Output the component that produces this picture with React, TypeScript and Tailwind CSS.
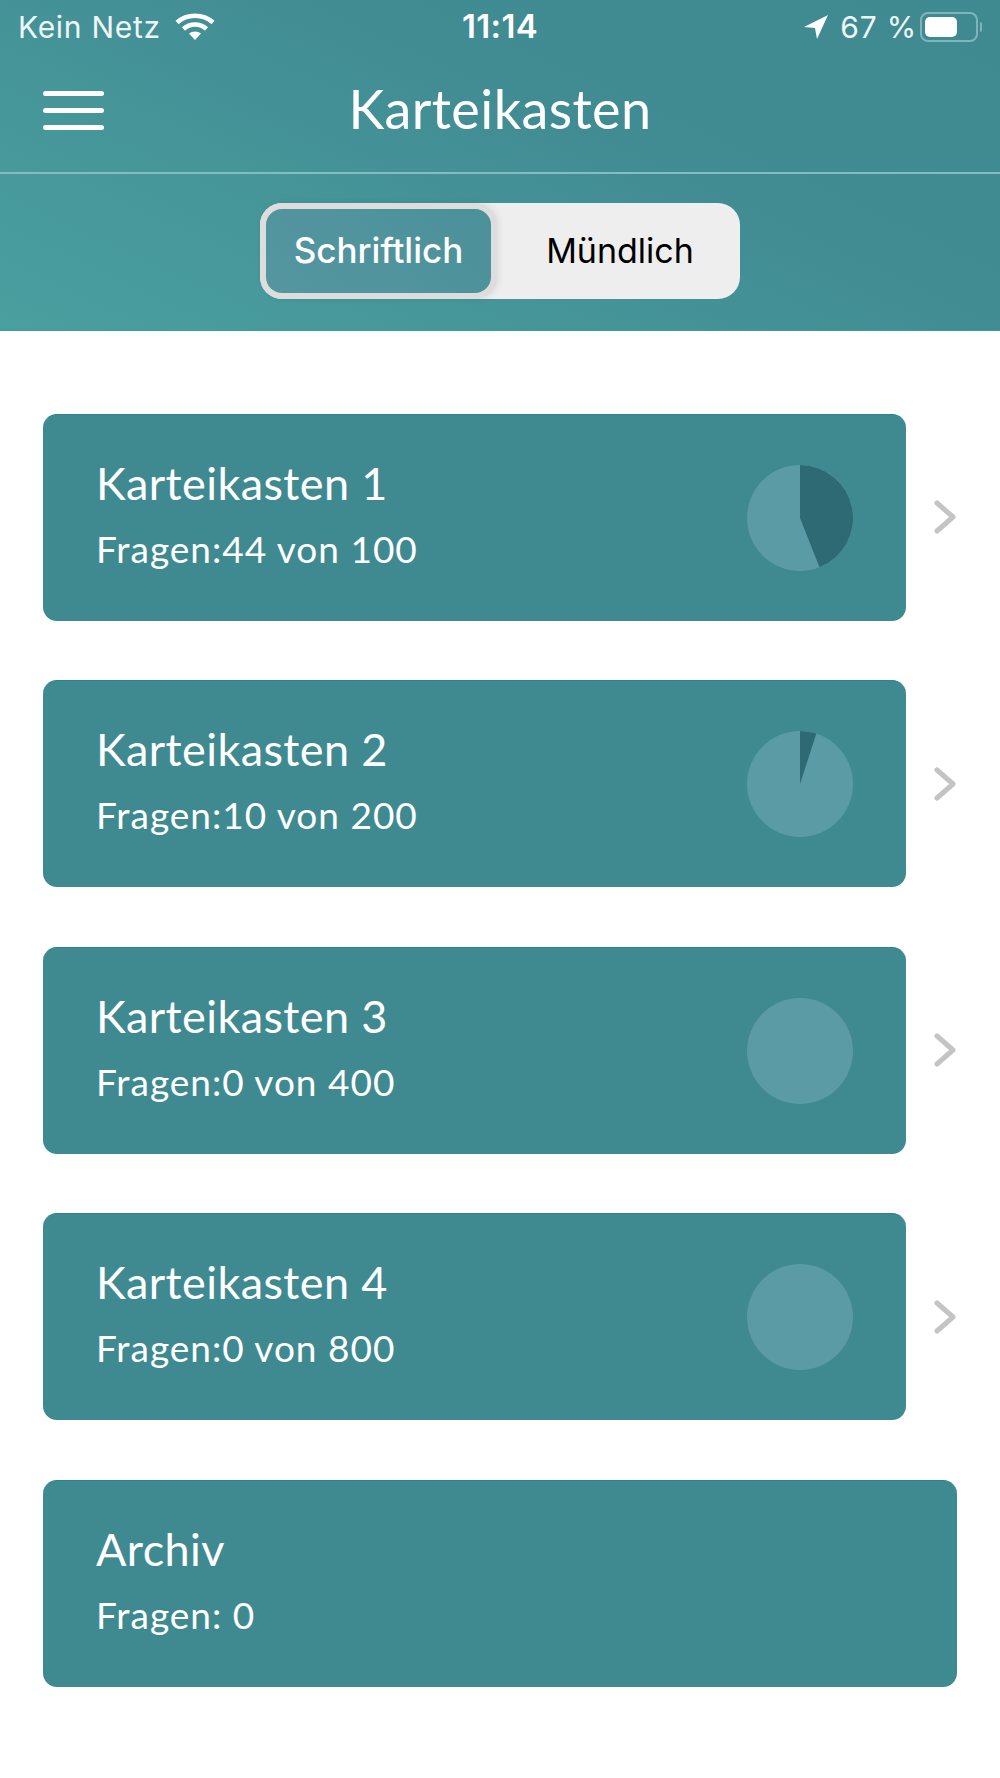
import React from "react";

const lato = "font-['Lato','Noto_Sans',sans-serif]";
const inter = "font-['Inter','Liberation_Sans',sans-serif]";

function Pie({ pct }: { pct: number }) {
  const a = (pct / 100) * 2 * Math.PI;
  const x = 53 + 53 * Math.sin(a);
  const y = 53 - 53 * Math.cos(a);
  return (
    <svg width="106" height="106" viewBox="0 0 106 106" className="shrink-0">
      <circle cx="53" cy="53" r="53" fill="#5a9ba6" />
      {pct > 0 && <path d={`M53 53 L53 0 A53 53 0 ${pct > 50 ? 1 : 0} 1 ${x} ${y} Z`} fill="#2e6a73" />}
    </svg>
  );
}

function Chevron() {
  return (
    <svg width="22" height="34" viewBox="0 0 22 34" className="shrink-0" fill="none">
      <path d="M3 3 L19 17 L3 31" stroke="#c4c4c4" strokeWidth="5" strokeLinecap="round" strokeLinejoin="round" />
    </svg>
  );
}

function CardText({ title, sub }: { title: string; sub: string }) {
  return (
    <div className={`${lato} text-white pb-[8px] -ml-[1px]`}>
      <div className="text-[45px] leading-[52px] tracking-[0.4px]">{title}</div>
      <div className="mt-[18px] text-[37px] leading-[44px] tracking-[1px]">{sub}</div>
    </div>
  );
}

const boxes = [
  { title: "Karteikasten 1", sub: "Fragen:44 von 100", pct: 44 },
  { title: "Karteikasten 2", sub: "Fragen:10 von 200", pct: 5 },
  { title: "Karteikasten 3", sub: "Fragen:0 von 400", pct: 0 },
  { title: "Karteikasten 4", sub: "Fragen:0 von 800", pct: 0 },
];

export default function App() {
  return (
    <div className="w-[1000px] h-[1778px] bg-white overflow-hidden">
      <header className="h-[331px] bg-[linear-gradient(25deg,#4a9f9f_0%,#46979a_28%,#418c93_60%,#3f8991_100%)] border-b border-[#3f9a9a] flex flex-col">
        <div className={`${inter} h-[54px] px-[18px] flex items-center justify-between text-white text-[30px]`}>
          <div className="flex-1 flex items-center gap-[14px]">
            <span className="text-[#eef6f6] tracking-[0.7px]">Kein Netz</span>
            <svg width="40" height="30" viewBox="0 0 40 30" fill="none" stroke="white" strokeWidth="4.5">
              <path d="M2 10.5 C12 1.5 28 1.5 38 10.5" />
              <path d="M8.5 17 C15 11 25 11 31.5 17" />
              <path d="M20 28 L14 21.5 C17.5 18.8 22.5 18.8 26 21.5 Z" fill="white" stroke="none" />
            </svg>
          </div>
          <span className="font-semibold text-[33px] tracking-[0.3px]">11:14</span>
          <div className="flex-1 flex items-center justify-end gap-[11px]">
            <svg width="26" height="26" viewBox="0 0 26 26" fill="white">
              <path d="M25 1 L14 25 L12 14 L1 13 Z" />
            </svg>
            <span className="text-[#eef6f6] tracking-[0.8px]">67 %</span>
            <div className="flex items-center gap-[2px] -ml-[8px]">
              <div className="w-[58px] h-[30px] rounded-[8px] border-2 border-[#7fb4ba] p-[3px] flex">
                <div className="w-[32px] h-full rounded-[5px] bg-white" />
              </div>
              <div className="w-[2px] h-[10px] rounded-r bg-[#7fb4ba]" />
            </div>
          </div>
        </div>

        <div className="relative h-[120px] flex items-center justify-center border-b-2 border-[#84bcc0]">
          <div className="absolute left-[43px] top-[37px] flex flex-col gap-[12px]">
            <span className="block w-[61px] h-[5px] rounded-full bg-white" />
            <span className="block w-[61px] h-[5px] rounded-full bg-white" />
            <span className="block w-[61px] h-[5px] rounded-full bg-white" />
          </div>
          <h1 className={`${lato} text-white text-[54px] leading-[60px] font-normal tracking-[0.4px] pb-[8px]`}>Karteikasten</h1>
        </div>

        <div className="flex-1 flex items-center justify-center pb-[3px]">
          <div className={`${inter} w-[480px] h-[96px] rounded-[22px] bg-[#eeeeee] flex items-stretch text-[34px]`}>
            <div className="w-[237px] rounded-[22px] bg-[#dddddd] p-[6px] flex shadow-[2px_0_6px_rgba(0,0,0,0.08)]">
              <div className="flex-1 rounded-[16px] bg-[linear-gradient(45deg,#55969f,#4b919a)] text-white font-medium flex items-center justify-center text-[35px]">
                Schriftlich
              </div>
            </div>
            <div className="flex-1 text-black flex items-center justify-center pl-[3px]">Mündlich</div>
          </div>
        </div>
      </header>

      <main className="px-[43px] pt-[82.5px] flex flex-col gap-[59.5px]">
        {boxes.map((b) => (
          <div key={b.title} className="flex items-center gap-[28px]">
            <div className="w-[863px] h-[207px] rounded-[14px] bg-[#3f8a90] border-t border-[#2f8489] pl-[54px] pr-[53px] flex items-center justify-between">
              <CardText title={b.title} sub={b.sub} />
              <Pie pct={b.pct} />
            </div>
            <Chevron />
          </div>
        ))}
        <div className="w-[914px] h-[207px] rounded-[14px] bg-[#3f8a90] border-t border-[#2f8489] pl-[54px] flex items-center">
          <CardText title="Archiv" sub="Fragen: 0" />
        </div>
      </main>
    </div>
  );
}
